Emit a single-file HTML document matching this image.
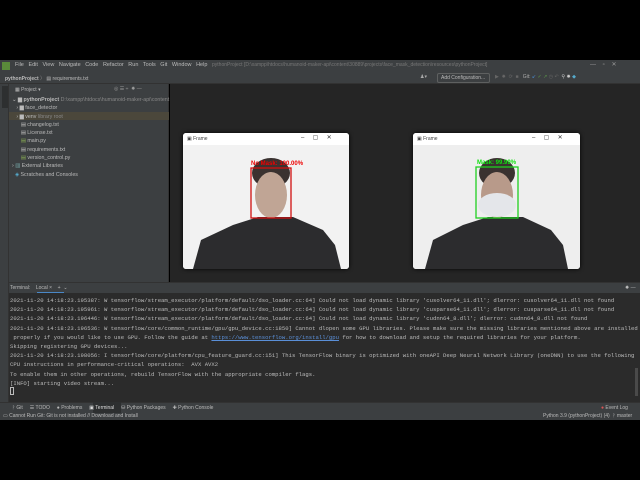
<!DOCTYPE html>
<html><head><style>
*{margin:0;padding:0;box-sizing:border-box}
body{width:640px;height:480px;background:#000;position:relative;overflow:hidden;font-family:"Liberation Sans",sans-serif;color:#bbb}
.a{position:absolute}
.mono{font-family:"Liberation Mono",monospace;font-size:5.6px;white-space:pre;color:#bbbbbb}
.s{font-size:5px;color:#bbb;white-space:nowrap}
</style></head><body>
<div class="a" style="left:0;top:60px;width:640px;height:12px;background:#3c3f41"></div>
<div class="a" style="left:2px;top:62px;width:8px;height:8px;background:#5a8a3a"></div>
<div class="a s" style="left:15px;top:62px;font-size:5.5px">File&nbsp;&nbsp; Edit&nbsp;&nbsp; View&nbsp;&nbsp; Navigate&nbsp;&nbsp; Code&nbsp;&nbsp; Refactor&nbsp;&nbsp; Run&nbsp;&nbsp; Tools&nbsp;&nbsp; Git&nbsp;&nbsp; Window&nbsp;&nbsp; Help</div>
<div class="a s" style="left:212px;top:62px;color:#777">pythonProject [D:\xampp\htdocs\humanoid-maker-api\content\30889\projects\face_mask_detection\resources\pythonProject]</div>
<div class="a s" style="left:590px;top:61px;color:#999;font-size:6px">—&nbsp;&nbsp;&nbsp; ▫&nbsp;&nbsp;&nbsp; ✕</div>
<div class="a" style="left:0;top:72px;width:640px;height:12px;background:#3c3f41;border-bottom:1px solid #323232"></div>
<div class="a s" style="left:5px;top:75px;font-weight:bold">pythonProject <span style="font-weight:normal;color:#888">〉</span> <span style="font-weight:normal">▤ requirements.txt</span></div>
<div class="a" style="left:437px;top:73px;width:53px;height:10px;border:1px solid #5e6060;border-radius:2px"></div>
<div class="a s" style="left:441px;top:75px">Add Configuration...</div>
<div class="a s" style="left:420px;top:74px;color:#aaa">♟▾</div>
<div class="a s" style="left:495px;top:74px;color:#666">▶&nbsp; ✹&nbsp; ⟳&nbsp; ■&nbsp;&nbsp; <span style="color:#aaa">Git:</span> <span style="color:#4a90d9">↙</span> <span style="color:#5a9a4a">✓</span> <span style="color:#5a9a4a">↗</span> ◷ ↶&nbsp; <span style="color:#ccc">⚲ ✹</span> <span style="color:#5ac">◆</span></div>
<div class="a" style="left:0;top:84px;width:9px;height:318px;background:#3c3f41;border-right:1px solid #323232"></div>
<div class="a" style="left:2px;top:86px;width:6px;height:22px;background:#2d2f30"></div>
<div class="a" style="left:9px;top:84px;width:160px;height:198px;background:#3c3f41;border-right:1px solid #323232"></div>
<div class="a s" style="left:15px;top:87px">▦ Project ▾</div>
<div class="a s" style="left:114px;top:86px;color:#999">◎ ☰ ÷ &nbsp;✹ —</div>
<div class="a" style="left:9px;top:112px;width:160px;height:8px;background:#4b473b"></div>
<div class="a s" style="left:12px;top:96px;line-height:8.3px;font-size:5.3px">
⌄ ▆ <b>pythonProject</b> <span style="color:#888">D:\xampp\htdocs\humanoid-maker-api\content</span><br>
&nbsp;&nbsp;&nbsp;› ▆ face_detector<br>
&nbsp;&nbsp;&nbsp;› ▆ venv <span style="color:#888">library root</span><br>
&nbsp;&nbsp;&nbsp;&nbsp;&nbsp;&nbsp;▤ changelog.txt<br>
&nbsp;&nbsp;&nbsp;&nbsp;&nbsp;&nbsp;▤ License.txt<br>
&nbsp;&nbsp;&nbsp;&nbsp;&nbsp;&nbsp;<span style="color:#8a5">▤</span> main.py<br>
&nbsp;&nbsp;&nbsp;&nbsp;&nbsp;&nbsp;▤ requirements.txt<br>
&nbsp;&nbsp;&nbsp;&nbsp;&nbsp;&nbsp;<span style="color:#8a5">▤</span> version_control.py<br>
› <span style="color:#7aa">▥</span> External Libraries<br>
&nbsp;&nbsp;<span style="color:#5ac">◈</span> Scratches and Consoles</div>
<div class="a" style="left:170px;top:84px;width:470px;height:198px;background:#252525"></div>
<div class="a" style="left:183px;top:133px;width:166px;height:136px;background:#f0f0f0;border-radius:3px;overflow:hidden;box-shadow:0 0 4px #000">
<div class="a" style="left:0;top:0;width:166px;height:12px;background:#fff"></div>
<div class="a" style="left:4px;top:3px;font-size:5px;color:#444">▣ Frame</div>
<div class="a" style="left:118px;top:1px;font-size:6px;color:#333">–&nbsp;&nbsp;&nbsp;&nbsp; ▢&nbsp;&nbsp;&nbsp;&nbsp; ✕</div>
<svg class="a" style="left:0;top:12px" width="166" height="124">
<rect width="166" height="124" fill="#f2f2f2"/>
<polygon points="10,124 18,95 50,80 75,72 110,72 140,85 152,100 158,124" fill="#2c2c2e"/>
<ellipse cx="88" cy="28" rx="19" ry="15" fill="#3a3230"/>
<ellipse cx="88" cy="50" rx="16" ry="23" fill="#c0a595"/>
<rect x="68" y="23" width="40" height="50" fill="none" stroke="#d01010" stroke-width="1.3"/>
<text x="68" y="20" font-size="6" font-weight="bold" fill="#e00" font-family="Liberation Sans">No Mask: 100.00%</text>
</svg></div>
<div class="a" style="left:413px;top:133px;width:167px;height:136px;background:#f0f0f0;border-radius:3px;overflow:hidden;box-shadow:0 0 4px #000">
<div class="a" style="left:0;top:0;width:167px;height:12px;background:#fff"></div>
<div class="a" style="left:4px;top:3px;font-size:5px;color:#444">▣ Frame</div>
<div class="a" style="left:119px;top:1px;font-size:6px;color:#333">–&nbsp;&nbsp;&nbsp;&nbsp; ▢&nbsp;&nbsp;&nbsp;&nbsp; ✕</div>
<svg class="a" style="left:0;top:12px" width="167" height="124">
<rect width="167" height="124" fill="#eeeeee"/>
<polygon points="12,124 20,95 50,80 75,72 110,72 138,85 150,100 155,124" fill="#2c2c2e"/>
<ellipse cx="84" cy="28" rx="18" ry="15" fill="#3a3230"/>
<ellipse cx="84" cy="50" rx="16" ry="23" fill="#b89a8a"/>
<ellipse cx="84" cy="60" rx="19" ry="12" fill="#e4e6ea"/>
<rect x="63" y="22" width="42" height="51" fill="none" stroke="#20d020" stroke-width="1.3"/>
<text x="64" y="19" font-size="6" font-weight="bold" fill="#10e010" font-family="Liberation Sans">Mask: 99.99%</text>
</svg></div>
<div class="a" style="left:9px;top:282px;width:631px;height:120px;background:#2b2b2b;border-top:1px solid #323232"></div>
<div class="a" style="left:9px;top:283px;width:631px;height:10px;background:#3c3f41"></div>
<div class="a s" style="left:10px;top:285px">Terminal:&nbsp;&nbsp;&nbsp; Local ×&nbsp;&nbsp;&nbsp; +&nbsp; ⌄</div>
<div class="a s" style="left:625px;top:285px">✹ —</div>
<div class="a" style="left:37px;top:292px;width:27px;height:1px;background:#4a88c7"></div>
<div class="a mono" style="left:10px;top:296px;line-height:9.2px">2021-11-20 14:18:23.195387: W tensorflow/stream_executor/platform/default/dso_loader.cc:64] Could not load dynamic library 'cusolver64_11.dll'; dlerror: cusolver64_11.dll not found
2021-11-20 14:18:23.195961: W tensorflow/stream_executor/platform/default/dso_loader.cc:64] Could not load dynamic library 'cusparse64_11.dll'; dlerror: cusparse64_11.dll not found
2021-11-20 14:18:23.196446: W tensorflow/stream_executor/platform/default/dso_loader.cc:64] Could not load dynamic library 'cudnn64_8.dll'; dlerror: cudnn64_8.dll not found
2021-11-20 14:18:23.196536: W tensorflow/core/common_runtime/gpu/gpu_device.cc:1850] Cannot dlopen some GPU libraries. Please make sure the missing libraries mentioned above are installed
 properly if you would like to use GPU. Follow the guide at <span style="color:#5a8fd8;text-decoration:underline">https://www.tensorflow.org/install/gpu</span> for how to download and setup the required libraries for your platform.
Skipping registering GPU devices...
2021-11-20 14:18:23.198056: I tensorflow/core/platform/cpu_feature_guard.cc:151] This TensorFlow binary is optimized with oneAPI Deep Neural Network Library (oneDNN) to use the following
CPU instructions in performance-critical operations:  AVX AVX2
To enable them in other operations, rebuild TensorFlow with the appropriate compiler flags.
[INFO] starting video stream...</div>
<div class="a" style="left:10px;top:387px;width:4px;height:8px;border:1px solid #bbb"></div>
<div class="a" style="left:635px;top:368px;width:3px;height:28px;background:#4a4a4a"></div>
<div class="a" style="left:0;top:402px;width:640px;height:11px;background:#3c3f41;border-top:1px solid #323232"></div>
<div class="a" style="left:93px;top:402px;width:28px;height:11px;background:#2d2f30"></div>
<div class="a s" style="left:12px;top:405px">ᚹ Git&nbsp;&nbsp;&nbsp;&nbsp; ☰ TODO&nbsp;&nbsp;&nbsp;&nbsp; ● Problems&nbsp;&nbsp;&nbsp;&nbsp; <span style="color:#ddd">▣ Terminal</span>&nbsp;&nbsp;&nbsp;&nbsp; ⛁ Python Packages&nbsp;&nbsp;&nbsp;&nbsp; ✚ Python Console</div>
<div class="a s" style="left:601px;top:405px"><span style="color:#d55">●</span> Event Log</div>
<div class="a" style="left:0;top:413px;width:640px;height:7px;background:#3c3f41"></div>
<div class="a s" style="left:3px;top:413px;font-size:5px">▭ Cannot Run Git: Git is not installed // Download and Install</div>
<div class="a s" style="left:543px;top:413px;font-size:5px">Python 3.9 (pythonProject) (4)&nbsp; ᚹ master</div>
</body></html>
